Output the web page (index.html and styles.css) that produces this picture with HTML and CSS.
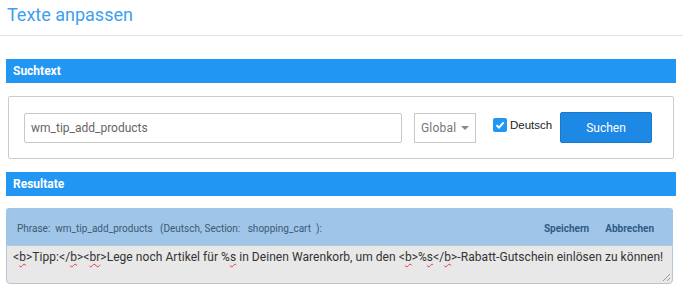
FILE: index.html
```html
<!DOCTYPE html>
<html lang="de">
<head>
    <meta charset="UTF-8">
    <title>Texte anpassen</title>
    <link rel="stylesheet" href="styles.css">
</head>
<body>
    <div class="page-head">
        <h1>Texte anpassen</h1>
    </div>

    <div class="content">
        <div class="section-bar">Suchtext</div>

        <div class="search-box">
            <input class="search-input" type="text" value="wm_tip_add_products">
            <div class="select">
                <span>Global</span>
                <span class="caret"></span>
            </div>
            <label class="check">
                <span class="check-box">
                    <svg width="10" height="10" viewBox="0 0 10 10"><path d="M1.5 5.2 L4 7.6 L8.6 2.4" fill="none" stroke="#fff" stroke-width="2"/></svg>
                </span>
                Deutsch
            </label>
            <button class="btn-search">Suchen</button>
        </div>

        <div class="section-bar">Resultate</div>

        <div class="result">
            <div class="result-head">
                <div class="phrase">Phrase:&nbsp; wm_tip_add_products &nbsp;&nbsp;(Deutsch,&nbsp;Section:&nbsp;&nbsp; shopping_cart &nbsp;):</div>
                <div class="actions">
                    <a>Speichern</a>
                    <a>Abbrechen</a>
                </div>
            </div>
            <div class="result-text">&lt;<span class="sp">b</span>&gt;Tipp:&lt;/<span class="sp">b</span>&gt;&lt;<span class="sp">br</span>&gt;Lege noch Artikel für %<span class="sp">s</span> in Deinen Warenkorb, um den &lt;<span class="sp">b</span>&gt;%<span class="sp">s</span>&lt;/<span class="sp">b</span>&gt;-Rabatt-Gutschein einlösen zu können!<span class="grip"></span></div>
        </div>
    </div>
</body>
</html>
```

FILE: styles.css
```css
* {
    margin: 0;
    padding: 0;
    box-sizing: border-box;
}

body {
    font-family: Roboto, 'Liberation Sans', sans-serif;
    background: #fff;
    color: #333;
}

.page-head {
    height: 36px;
    border-bottom: 1px solid #e2e2e2;
    padding: 4px 7px 0;
}

.page-head h1 {
    font-size: 18px;
    font-weight: 400;
    color: #3d9ff0;
    line-height: 22px;
}

.content {
    padding: 23px 7px 0 6px;
}

.section-bar {
    background: #2196f3;
    color: #fff;
    font-size: 12px;
    font-weight: 700;
    height: 24px;
    line-height: 24px;
    padding: 0 7px;
}

.search-box {
    margin: 13px 2px 13px 2px;
    border: 1px solid #ccc;
    border-radius: 2px;
    padding: 15px 21px 15px 15px;
    display: flex;
    align-items: center;
}

.search-input {
    width: 378px;
    height: 30px;
    border: 1px solid #c8c8c8;
    border-radius: 2px;
    padding: 0 6px;
    font-family: Roboto, sans-serif;
    font-size: 12px;
    color: #666;
    outline: none;
}

.select {
    margin-left: 12px;
    width: 62px;
    height: 30px;
    border: 1px solid #c8c8c8;
    display: flex;
    align-items: center;
    justify-content: space-between;
    padding: 0 6px 0 6px;
    font-size: 12px;
    color: #777;
    letter-spacing: 0.2px;
}

.caret {
    width: 0;
    height: 0;
    border-left: 4px solid transparent;
    border-right: 4px solid transparent;
    border-top: 4px solid #888;
}

.check {
    margin-left: 17px;
    align-self: flex-start;
    margin-top: 6px;
    display: flex;
    align-items: center;
    gap: 3px;
    font-family: 'Liberation Sans', sans-serif;
    font-size: 11.5px;
    color: #222;
}

.check-box {
    width: 14px;
    height: 14px;
    border-radius: 2px;
    background: #2196f3;
    display: flex;
    align-items: center;
    justify-content: center;
}

.btn-search {
    margin-left: auto;
    width: 92px;
    height: 31px;
    background: #1e88e5;
    border: 1px solid #1a78cc;
    border-radius: 2px;
    color: #fff;
    font-family: Roboto, sans-serif;
    font-size: 12px;
}

.result {
    margin-top: 12px;
    margin-right: 3px;
}

.result-head {
    background: #9fc5e8;
    border-radius: 3px 3px 0 0;
    height: 37px;
    display: flex;
    align-items: center;
    justify-content: space-between;
    padding: 4px 19px 0 11px;
}

.phrase {
    font-size: 10px;
    color: #3d5a73;
}

.actions {
    display: flex;
    gap: 16px;
    font-size: 10px;
    font-weight: 700;
    color: #2f5c85;
}

.result-text {
    position: relative;
    height: 39px;
    background: #e8e8e8;
    border: 1px solid #b7c6d3;
    border-radius: 0 0 4px 4px;
    padding: 4px 6px;
    font-size: 12px;
    color: #333;
    white-space: nowrap;
    letter-spacing: 0.05px;
}

.sp {
    text-decoration: underline wavy #e53935;
    text-decoration-thickness: 1px;
    text-underline-offset: 2px;
}

.grip {
    position: absolute;
    right: 2px;
    bottom: 2px;
    width: 7px;
    height: 7px;
    background: linear-gradient(135deg, transparent 45%, #999 45%, #999 55%, transparent 55%, transparent 75%, #999 75%, #999 85%, transparent 85%);
}
```
